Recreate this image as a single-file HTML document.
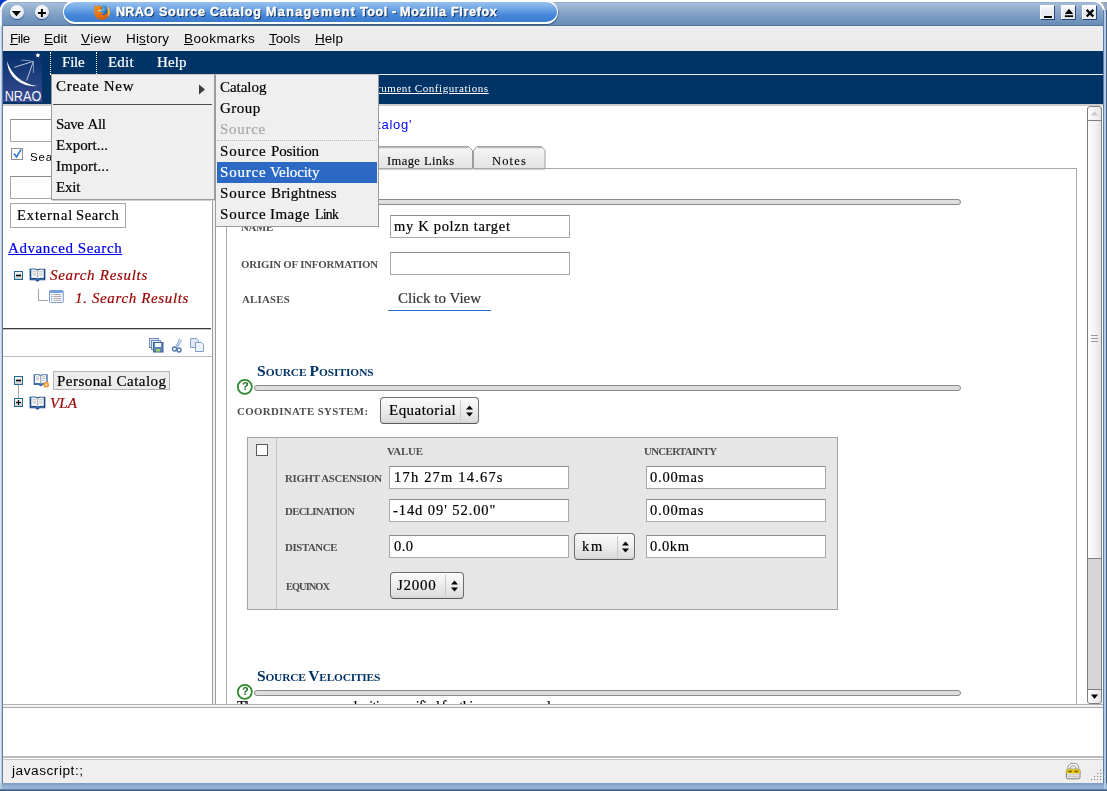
<!DOCTYPE html>
<html><head><meta charset="utf-8"><title>NRAO Source Catalog Management Tool - Mozilla Firefox</title>
<style>

html,body{margin:0;padding:0;}
body{width:1107px;height:791px;overflow:hidden;position:relative;background:#fff;font-family:"Liberation Sans",sans-serif;}
.a{position:absolute;box-sizing:border-box;}
.t{position:absolute;white-space:pre;line-height:1;will-change:transform;-webkit-text-stroke:0.2px;}
.inp{position:absolute;box-sizing:border-box;background:#fff;border:1px solid #a8a8a8;border-top-color:#8c8c8c;}
.sel{position:absolute;box-sizing:border-box;border:1px solid #6e6e6e;border-bottom-color:#5a5a5a;border-radius:4px;background:linear-gradient(#fbfbfb,#ececec 50%,#dedede 90%,#d2d2d2);}
.wb{width:15px;height:15px;background:linear-gradient(#fbfcfd,#e9edf2 35%,#e4e8ee 60%,#f2f4f7);border:1px solid #fbfcfd;border-right-color:#2a4d7e;border-bottom-color:#1f4273;}
.bar{position:absolute;box-sizing:border-box;height:6px;border:1px solid #8a8a8a;border-radius:3px;background:#dedede;}

</style></head>
<body>

<!-- window frame -->
<div class="a" style="left:0;top:0;width:1107px;height:791px;background:#fff;"></div>
<!-- title bar -->
<div class="a" id="titlebar" style="left:2px;top:2px;width:1101px;height:24px;background:linear-gradient(#8ea9ca 0,#a4bcd7 1.5px,#82a1c5 50%,#648ab5);border-radius:8.500px 9px 0 0;"></div>
<div class="a" style="left:3px;top:25px;width:1100px;height:1px;background:#52749e;"></div>
<div class="a" style="left:0;top:0;width:11px;height:11px;background:radial-gradient(circle at 10.300px 10.300px,rgba(255,255,255,0) 10.100px,#0a3cc0 10.900px);"></div>
<div class="a" style="left:1094px;top:2px;width:13px;height:8px;background:radial-gradient(circle at 0px 9px,rgba(255,255,255,0) 8.600px,#fff 9.200px,#fff 10.400px,#aab3c0 11px,#8fa3bd 14px);"></div>
<!-- side borders -->
<div class="a" style="left:0;top:9px;width:2px;height:17px;background:linear-gradient(90deg,#fafbfd,#dde6f1);"></div>
<div class="a" style="left:0;top:26px;width:3px;height:765px;background:linear-gradient(90deg,#eef2f8 0,#b9cbe2 1.500px,#b4c8e0 2.200px,#5d7ea8 2.400px);"></div>
<div class="a" style="left:1103px;top:10px;width:4px;height:781px;background:linear-gradient(90deg,#5d7ea8 0,#5d7ea8 1px,#b9cde6 1.2px,#b4c8e2 2.9px,#40608a 3.1px);"></div>
<div class="a" style="left:0;top:783px;width:1107px;height:8px;background:linear-gradient(#7c9cc4 0,#86a4ca 2px,#9ab4d4 3px,#93aed0 6.3px,#3c5a80 6.7px);"></div>
<div class="a" style="left:0;top:783px;width:2px;height:6px;background:#b4c8e0;"></div>
<div class="a" style="left:1104px;top:783px;width:2px;height:6px;background:#b4c8e2;"></div>
<!-- title buttons -->
<div class="a" style="left:10px;top:5.400px;width:13.500px;height:13.500px;border-radius:50%;background:radial-gradient(circle at 45% 35%,#fff,#e8edf3 55%,#b9c7d8);box-shadow:0 1px 1px #2b4f80;"></div>
<svg class="a" style="left:10px;top:5px" width="14" height="14"><path d="M1.900 5.900h9.100L6.450 11.200z" fill="#000"/></svg>
<div class="a" style="left:35px;top:5.400px;width:13.500px;height:13.500px;border-radius:50%;background:radial-gradient(circle at 45% 35%,#fff,#e8edf3 55%,#b9c7d8);box-shadow:0 1px 1px #2b4f80;"></div>
<svg class="a" style="left:35px;top:6px" width="14" height="14"><path d="M2.900 7.100h8M6.900 3.100v8" stroke="#000" stroke-width="2"/></svg>
<!-- title pill -->
<div class="a" style="left:62.5px;top:0px;width:495.5px;height:24px;border:2px solid #fff;border-left-width:1.6px;border-right-width:1.6px;border-radius:12px;background:linear-gradient(#97c1ee,#6ea5e5 35%,#4587d8 65%,#3b7cd0);box-shadow:0.5px 1px 1px rgba(20,40,80,.55);"></div>
<!-- firefox icon -->
<svg class="a" style="left:94px;top:4px" width="16" height="16" viewBox="0 0 16 16">
<defs><radialGradient id="gl" cx="0.35" cy="0.3" r="0.8"><stop offset="0" stop-color="#6fd2f8"/><stop offset="0.5" stop-color="#2f86d8"/><stop offset="1" stop-color="#143c96"/></radialGradient>
<linearGradient id="fx" x1="0" y1="0" x2="0.3" y2="1"><stop offset="0" stop-color="#f08a1c"/><stop offset="0.5" stop-color="#ee7f14"/><stop offset="1" stop-color="#d8600c"/></linearGradient></defs>
<circle cx="9.200" cy="6.600" r="5.400" fill="url(#gl)"/>
<path d="M1.300 0.500L2.800 2.600L5.200 1.300L6.300 0.800L6.800 3L8.800 3.200L8.400 4.600L7.200 5.200L7.400 6.500L5 7.500L7.500 8.500L9.500 8.200L9 9.800L7.600 10.800C9 11.500 11.500 11 12.800 9C13.800 7 13.600 4.500 12.500 2.200C14.800 3.500 16 6 15.800 8.500C15.500 12.800 12 15.800 8 15.800C3.500 15.800 0.200 12.500 0.200 8C0.200 5 0.500 2.500 1.300 0.500z" fill="url(#fx)"/>
<path d="M12.500 2.200C14.800 3.500 16 6 15.800 8.500C15.600 10.500 14.800 12 13.600 13.200C14.600 10 14.400 5.800 12.500 2.200z" fill="#f9c235"/>
<path d="M4 6.300L6.800 5.500L6.600 6.800L4.600 7.400z" fill="#fbe3a0"/>
<path d="M7 3.400L8.500 3.400L8.300 4.500L7.300 4.900z" fill="#7a1c08"/>
</svg>
<!-- window controls -->
<div class="a wb" style="left:1040px;top:5px;"></div>
<div class="a" style="left:1044px;top:15.500px;width:8px;height:2px;background:#000;"></div>
<div class="a wb" style="left:1061px;top:5px;"></div>
<svg class="a" style="left:1061px;top:5px" width="15" height="15"><path d="M3.800 9L8 3.800L12.200 9z" fill="#000"/><rect x="3.900" y="10.300" width="8.200" height="1.800" fill="#000"/></svg>
<div class="a wb" style="left:1082px;top:5px;"></div>
<svg class="a" style="left:1082px;top:5px" width="15" height="15"><path d="M4.700 4.900l6.600 6.600M11.300 4.900l-6.600 6.600" stroke="#000" stroke-width="2.300"/></svg>

<!-- firefox menubar -->
<div class="a" style="left:3px;top:26px;width:1100px;height:25px;background:linear-gradient(#eeeeee,#eaeaea);"></div>

<!-- navy header -->
<div class="a" style="left:3px;top:51px;width:1100px;height:53px;background:#003366;"></div>
<div class="a" style="left:50px;top:74px;width:1053px;height:1px;background:#e8eef4;"></div>
<div class="a" style="left:3px;top:104px;width:1100px;height:2px;background:#cfccc8;"></div>
<!-- logo -->
<div class="a" style="left:3px;top:51px;width:39px;height:51px;background:linear-gradient(#002e68,#1c3d7c 45%,#39498f);"></div>
<svg class="a" style="left:3px;top:51px" width="39" height="52" viewBox="0 0 39 52">
<path d="M4.200 10.300C4.300 24.500 17 36.500 34.200 35C19 33.200 8 23 4.200 10.300z" fill="#fff"/>
<path d="M30.400 10.300L11.400 16.300M30.400 10.300L23.600 29.600" stroke="#dfe6f2" stroke-width="0.800" fill="none"/>
<path d="M18.200 9.100L28.100 9.900M30.400 11.400V22" stroke="#aebbd6" stroke-width="0.700" fill="none"/>
<path d="M34.900 1.800l0.650 1.700 1.800 0.100-1.400 1.150 0.500 1.750-1.550-1-1.550 1 0.500-1.750-1.400-1.150 1.800-0.100z" fill="#fff"/>
<circle cx="34.900" cy="4.200" r="1.400" fill="#fff"/>
<text x="1.700" y="49.700" font-family="Liberation Sans" font-size="13.800" textLength="36.700" lengthAdjust="spacingAndGlyphs" fill="#f4f6fb">NRAO</text>
</svg>
<div class="a" style="left:50px;top:52px;width:0;height:22px;border-left:1px dotted #fff;"></div>
<div class="a" style="left:96px;top:52px;width:0;height:22px;border-left:1px dotted #fff;"></div>

<!-- left panel -->
<div class="a" style="left:3px;top:106px;width:209px;height:598px;background:#fff;"></div>
<div class="inp" style="left:10px;top:119px;width:120px;height:23px;"></div>
<div class="a" style="left:11px;top:148px;width:12px;height:12px;background:#fff;border:1px solid #8f8f8f;"></div>
<svg class="a" style="left:11px;top:147px" width="13" height="13"><path d="M3 6.5l2.5 3.5L10 2.5" stroke="#3b7ed6" stroke-width="1.7" fill="none"/></svg>
<div class="inp" style="left:10px;top:176px;width:120px;height:23px;"></div>
<div class="a" style="left:10px;top:203px;width:116px;height:25px;background:#fff;border:1px solid #a6a6a6;"></div>
<!-- tree 1 -->
<svg class="a" style="left:14px;top:271px" width="10" height="10"><defs><linearGradient id="eg271" x1="0" y1="0" x2="0" y2="1"><stop offset="0" stop-color="#fff"/><stop offset="1" stop-color="#c9c9c9"/></linearGradient></defs><rect x="0.500" y="0.500" width="8" height="8" fill="url(#eg271)" stroke="#1f6a96"/><rect x="2" y="3.700" width="5" height="1.600" fill="#000"/></svg>
<svg class="a bk" style="left:29px;top:268px" width="17" height="15" viewBox="0 0 17 15"><path d="M0.600 1.300Q0.600 0.700 1.300 0.700H7L8.500 1.500L10 0.700H15.700Q16.400 0.700 16.400 1.300V12.200H10.500Q10 13.600 8.500 13.600T6.500 12.200H0.600z" fill="#1d4d8a"/><path d="M0.600 1.300Q0.600 0.700 1.300 0.700H7L8.500 1.500V3H0.600z" fill="#3d6fae"/><path d="M2.300 1.700Q5.500 1 7.900 2.300V10.300Q5.500 9.300 2.300 10.100z" fill="#fff"/><path d="M14.700 1.700Q11.500 1 9.100 2.300V10.300Q11.500 9.300 14.700 10.100z" fill="#fff"/><path d="M8.500 2.300V10.600" stroke="#b8b8b8" stroke-width="1.100"/><path d="M3.300 3.400h3.600M3.300 5.200h3.600M3.300 7h3.600M10.100 3.400h3.600M10.100 5.200h3.600M10.100 7h3.600" stroke="#b0b0b0" stroke-width="0.800"/><path d="M2 11.400H15" stroke="#4a78b4" stroke-width="0.700"/></svg>
<div class="a" style="left:38px;top:289px;width:10px;height:12px;border-left:1px solid #a3a3a3;border-bottom:1px solid #a3a3a3;"></div>
<svg class="a" style="left:49px;top:290px" width="15.200" height="13.500" viewBox="0 0 16 14"><rect x="0.500" y="0.500" width="14.500" height="12.500" rx="1" fill="#fff" stroke="#6c90cc"/><rect x="1" y="1" width="13.500" height="2" fill="#6a9be2"/><path d="M4.500 4.700h8.500M4.500 6.700h8.500M4.500 8.700h8.500M4.500 10.700h8.500" stroke="#9a9a9a" stroke-width="0.900"/><path d="M2.200 4.700h1.200M2.200 6.700h1.200M2.200 8.700h1.200M2.200 10.700h1.200" stroke="#3b8cf0" stroke-width="1"/></svg>
<div class="a" style="left:3px;top:328px;width:208px;height:1px;background:#3c3c3c;"></div><div class="a" style="left:3px;top:329px;width:208px;height:1px;background:#c4c4c4;"></div>
<!-- toolbar icons -->
<svg class="a" style="left:148px;top:337px" width="16" height="16" viewBox="0 0 16 16"><rect x="1.5" y="1.5" width="9" height="9" fill="#dfe8f5" stroke="#6f8db8"/><rect x="3.5" y="3.5" width="9" height="9" fill="#dfe8f5" stroke="#6f8db8"/><rect x="5.5" y="5.5" width="9.5" height="9.5" fill="#5f83b8" stroke="#41618f"/><rect x="7" y="6" width="6" height="4" fill="#f2f5fa"/><rect x="8" y="12" width="4" height="2.5" fill="#9fd06a"/></svg>
<svg class="a" style="left:171px;top:337px" width="13" height="16" viewBox="0 0 13 16"><path d="M8.800 1.500L5 10M10.500 3L6.500 10" stroke="#9db9e0" stroke-width="1.400" fill="none"/><circle cx="3.5" cy="12" r="2" fill="none" stroke="#4f78b5" stroke-width="1.4"/><circle cx="8" cy="13" r="2" fill="none" stroke="#4f78b5" stroke-width="1.4"/></svg>
<svg class="a" style="left:189px;top:337px" width="16" height="16" viewBox="0 0 16 16"><path d="M1.5 1.5h6l2 2v7h-8z" fill="#dfe8f5" stroke="#7f9fcc"/><path d="M6.5 5.5h6l2 2v7h-8z" fill="#eef3fb" stroke="#7f9fcc"/></svg>
<div class="a" style="left:3px;top:356px;width:209px;height:1px;background:#bdbdbd;"></div>
<!-- tree 2 -->
<svg class="a" style="left:14px;top:376px" width="10" height="10"><defs><linearGradient id="eg376" x1="0" y1="0" x2="0" y2="1"><stop offset="0" stop-color="#fff"/><stop offset="1" stop-color="#c9c9c9"/></linearGradient></defs><rect x="0.500" y="0.500" width="8" height="8" fill="url(#eg376)" stroke="#1f6a96"/><rect x="2" y="3.700" width="5" height="1.600" fill="#000"/></svg>
<div class="a" style="left:18px;top:385px;width:1px;height:13px;background:#a8a8a8;"></div>
<svg class="a" style="left:33px;top:373px" width="17" height="16" viewBox="0 0 17 16"><path d="M0.600 1.800Q0.600 1.200 1.300 1.200H6.500L7.700 1.900L8.900 1.200H14Q14.700 1.200 14.700 1.800V12H9.500Q9 13.200 7.700 13.200T5.800 12H0.600z" fill="#3f6ea8"/><path d="M2 2.200Q4.800 1.600 7.200 2.700V10.200Q4.800 9.300 2 10z" fill="#fff"/><path d="M13.300 2.200Q10.600 1.600 8.200 2.700V10.200Q10.600 9.300 13.300 10z" fill="#fff"/><path d="M7.700 2.700V10.500" stroke="#b8b8b8" stroke-width="1"/><path d="M3 3.800h3.200M3 5.500h3.200M3 7.200h3.200M9.200 3.800h3.200M9.200 5.500h3.200M9.200 7.200h3.200" stroke="#b0b0b0" stroke-width="0.800"/><circle cx="13.200" cy="11.700" r="2.900" fill="#f39a3a"/><circle cx="13.200" cy="11.700" r="1.200" fill="#fbd9a8"/></svg>
<div class="a" style="left:53px;top:371px;width:117px;height:19px;background:#ececec;border:1px solid #b4b4b4;"></div>
<svg class="a" style="left:14px;top:398px" width="10" height="10"><defs><linearGradient id="eg398" x1="0" y1="0" x2="0" y2="1"><stop offset="0" stop-color="#fff"/><stop offset="1" stop-color="#c9c9c9"/></linearGradient></defs><rect x="0.500" y="0.500" width="8" height="8" fill="url(#eg398)" stroke="#1f6a96"/><rect x="2" y="3.900" width="5" height="1.200" fill="#000"/><rect x="3.900" y="2" width="1.200" height="5" fill="#000"/></svg>
<svg class="a bk" style="left:29px;top:396px" width="17" height="15" viewBox="0 0 17 15"><path d="M0.600 1.300Q0.600 0.700 1.300 0.700H7L8.500 1.500L10 0.700H15.700Q16.400 0.700 16.400 1.300V12.200H10.500Q10 13.600 8.500 13.600T6.500 12.200H0.600z" fill="#1d4d8a"/><path d="M0.600 1.300Q0.600 0.700 1.300 0.700H7L8.500 1.500V3H0.600z" fill="#3d6fae"/><path d="M2.300 1.700Q5.500 1 7.900 2.300V10.300Q5.500 9.300 2.300 10.100z" fill="#fff"/><path d="M14.700 1.700Q11.500 1 9.100 2.300V10.300Q11.500 9.300 14.700 10.100z" fill="#fff"/><path d="M8.500 2.300V10.600" stroke="#b8b8b8" stroke-width="1.100"/><path d="M3.300 3.400h3.600M3.300 5.200h3.600M3.300 7h3.600M10.100 3.400h3.600M10.100 5.200h3.600M10.100 7h3.600" stroke="#b0b0b0" stroke-width="0.800"/><path d="M2 11.400H15" stroke="#4a78b4" stroke-width="0.700"/></svg>

<!-- splitter -->
<div class="a" style="left:212px;top:106px;width:1px;height:598px;background:#9c9c9c;"></div>
<div class="a" style="left:213px;top:106px;width:2px;height:598px;background:#f1f1f1;"></div>
<div class="a" style="left:215px;top:106px;width:1px;height:598px;background:#9c9c9c;"></div>

<!-- main content -->
<div class="a" style="left:226px;top:168px;width:851px;height:560px;border:1px solid #a9a9a9;border-bottom:none;"></div>
<!-- tabs -->
<svg class="a" style="left:360px;top:140px" width="200" height="30" viewBox="360 140 200 30">
<defs><linearGradient id="tg" x1="0" y1="0" x2="0" y2="1"><stop offset="0" stop-color="#f7f7f7"/><stop offset="1" stop-color="#e2e2e2"/></linearGradient></defs>
<path d="M370.5 169V150.500L374 146.500H468.500L472.500 150.500V169z" fill="url(#tg)" stroke="#9c9c9c"/>
<path d="M374.500 147.500H468.500" stroke="#b9b9b9" stroke-width="1.5"/>
<path d="M473.500 169V150.500L477 146.500H541.500L545 150.500V169z" fill="url(#tg)" stroke="#9c9c9c"/>
<path d="M477.500 147.500H541.500" stroke="#b9b9b9" stroke-width="1.5"/>
</svg>
<div class="a" style="left:227px;top:168px;width:849px;height:1px;background:#a9a9a9;"></div>
<!-- bars -->
<div class="bar" style="left:254px;top:199px;width:707px;"></div>
<div class="bar" style="left:254px;top:385px;width:707px;"></div>
<div class="bar" style="left:254px;top:690px;width:707px;"></div>
<!-- inputs -->
<div class="inp" style="left:390px;top:215px;width:180px;height:23px;"></div>
<div class="inp" style="left:390px;top:252px;width:180px;height:23px;"></div>
<div class="a" style="left:388px;top:310px;width:103px;height:1px;background:#2f6bd0;"></div>
<!-- help icons -->
<svg class="a" style="left:236px;top:377.5px" width="18" height="18" viewBox="0 0 18 18"><circle cx="8.800" cy="8.900" r="7" fill="#fff" stroke="#2f8a2f" stroke-width="1.800"/></svg>
<svg class="a" style="left:236px;top:682.5px" width="18" height="18" viewBox="0 0 18 18"><circle cx="8.800" cy="8.900" r="7" fill="#fff" stroke="#2f8a2f" stroke-width="1.800"/></svg>
<!-- coordinate select -->
<div class="sel" style="left:380px;top:397px;width:99px;height:27px;"></div>
<div class="a" style="left:460px;top:400px;width:1px;height:21px;background:#c9c9c9;"></div>
<svg class="a" style="left:465px;top:404px" width="9" height="14"><path d="M4.5 1.500L8 5.500H1zM4.500 12.500L8 8.500H1z" fill="#000"/></svg>
<!-- positions box -->
<div class="a" style="left:247px;top:437px;width:591px;height:173px;background:#e6e6e6;border:1px solid #a3a3a3;"></div>
<div class="a" style="left:276px;top:438px;width:1px;height:171px;background:#c4c4c4;"></div>
<div class="a" style="left:256px;top:444px;width:12px;height:12px;background:#fff;border:1px solid #5a5a5a;"></div>
<div class="inp" style="left:389px;top:466px;width:180px;height:23px;"></div>
<div class="inp" style="left:646px;top:466px;width:180px;height:23px;"></div>
<div class="inp" style="left:389px;top:499px;width:180px;height:23px;"></div>
<div class="inp" style="left:646px;top:499px;width:180px;height:23px;"></div>
<div class="inp" style="left:389px;top:535px;width:180px;height:23px;"></div>
<div class="inp" style="left:646px;top:535px;width:180px;height:23px;"></div>
<div class="sel" style="left:574px;top:533px;width:61px;height:27px;"></div>
<div class="a" style="left:617px;top:536px;width:1px;height:21px;background:#c9c9c9;"></div>
<svg class="a" style="left:621px;top:540px" width="9" height="14"><path d="M4.5 1.500L8 5.500H1zM4.500 12.500L8 8.500H1z" fill="#000"/></svg>
<div class="sel" style="left:390px;top:572px;width:74px;height:27px;"></div>
<div class="a" style="left:445px;top:575px;width:1px;height:21px;background:#c9c9c9;"></div>
<svg class="a" style="left:450px;top:579px" width="9" height="14"><path d="M4.5 1.500L8 5.500H1zM4.500 12.500L8 8.500H1z" fill="#000"/></svg>

<span class="t" style="left:116.38px;top:6.40px;font-family:'Liberation Sans',sans-serif;font-size:12.6px;font-weight:bold;font-style:normal;color:#fff;letter-spacing:0.226px;-webkit-text-stroke:0;text-shadow:1px 1px 0.3px #0a1e44;-webkit-text-stroke:0.4px;">NRAO</span>
<span class="t" style="left:158.62px;top:6.40px;font-family:'Liberation Sans',sans-serif;font-size:12.6px;font-weight:bold;font-style:normal;color:#fff;letter-spacing:0.658px;-webkit-text-stroke:0;text-shadow:1px 1px 0.3px #0a1e44;-webkit-text-stroke:0.4px;">Source</span>
<span class="t" style="left:209.61px;top:6.40px;font-family:'Liberation Sans',sans-serif;font-size:12.6px;font-weight:bold;font-style:normal;color:#fff;letter-spacing:0.773px;-webkit-text-stroke:0;text-shadow:1px 1px 0.3px #0a1e44;-webkit-text-stroke:0.4px;">Catalog</span>
<span class="t" style="left:265.68px;top:6.40px;font-family:'Liberation Sans',sans-serif;font-size:12.6px;font-weight:bold;font-style:normal;color:#fff;letter-spacing:1.335px;-webkit-text-stroke:0;text-shadow:1px 1px 0.3px #0a1e44;-webkit-text-stroke:0.4px;">Management</span>
<span class="t" style="left:360.07px;top:6.40px;font-family:'Liberation Sans',sans-serif;font-size:12.6px;font-weight:bold;font-style:normal;color:#fff;letter-spacing:0.558px;-webkit-text-stroke:0;text-shadow:1px 1px 0.3px #0a1e44;-webkit-text-stroke:0.4px;">Tool</span>
<span class="t" style="left:391.88px;top:6.40px;font-family:'Liberation Sans',sans-serif;font-size:12.6px;font-weight:bold;font-style:normal;color:#fff;-webkit-text-stroke:0;text-shadow:1px 1px 0.3px #0a1e44;-webkit-text-stroke:0.4px;">-</span>
<span class="t" style="left:400.38px;top:6.40px;font-family:'Liberation Sans',sans-serif;font-size:12.6px;font-weight:bold;font-style:normal;color:#fff;letter-spacing:0.653px;-webkit-text-stroke:0;text-shadow:1px 1px 0.3px #0a1e44;-webkit-text-stroke:0.4px;">Mozilla</span>
<span class="t" style="left:451.38px;top:6.40px;font-family:'Liberation Sans',sans-serif;font-size:12.6px;font-weight:bold;font-style:normal;color:#fff;letter-spacing:0.645px;-webkit-text-stroke:0;text-shadow:1px 1px 0.3px #0a1e44;-webkit-text-stroke:0.4px;">Firefox</span>
<span class="t" style="left:10.00px;top:32.00px;font-family:'Liberation Sans',sans-serif;font-size:13.5px;font-weight:normal;font-style:normal;color:#000;letter-spacing:-0.500px;-webkit-text-stroke:0;"><u>F</u>ile</span>
<span class="t" style="left:44.00px;top:32.00px;font-family:'Liberation Sans',sans-serif;font-size:13.5px;font-weight:normal;font-style:normal;color:#000;letter-spacing:-0.032px;-webkit-text-stroke:0;"><u>E</u>dit</span>
<span class="t" style="left:81.12px;top:32.00px;font-family:'Liberation Sans',sans-serif;font-size:13.5px;font-weight:normal;font-style:normal;color:#000;letter-spacing:0.361px;-webkit-text-stroke:0;"><u>V</u>iew</span>
<span class="t" style="left:126.20px;top:32.00px;font-family:'Liberation Sans',sans-serif;font-size:13.5px;font-weight:normal;font-style:normal;color:#000;letter-spacing:0.172px;-webkit-text-stroke:0;">Hi<u>s</u>tory</span>
<span class="t" style="left:184.00px;top:32.00px;font-family:'Liberation Sans',sans-serif;font-size:13.5px;font-weight:normal;font-style:normal;color:#000;letter-spacing:0.413px;-webkit-text-stroke:0;"><u>B</u>ookmarks</span>
<span class="t" style="left:269.09px;top:32.00px;font-family:'Liberation Sans',sans-serif;font-size:13.5px;font-weight:normal;font-style:normal;color:#000;letter-spacing:-0.072px;-webkit-text-stroke:0;"><u>T</u>ools</span>
<span class="t" style="left:314.80px;top:32.00px;font-family:'Liberation Sans',sans-serif;font-size:13.5px;font-weight:normal;font-style:normal;color:#000;letter-spacing:0.040px;-webkit-text-stroke:0;"><u>H</u>elp</span>
<span class="t" style="left:61.72px;top:55.00px;font-family:'Liberation Serif',serif;font-size:15px;font-weight:normal;font-style:normal;color:#fff;letter-spacing:-0.206px;">File</span>
<span class="t" style="left:107.62px;top:55.00px;font-family:'Liberation Serif',serif;font-size:15px;font-weight:normal;font-style:normal;color:#fff;letter-spacing:0.190px;">Edit</span>
<span class="t" style="left:156.65px;top:55.00px;font-family:'Liberation Serif',serif;font-size:15px;font-weight:normal;font-style:normal;color:#fff;letter-spacing:0.112px;">Help</span>
<span class="t" style="left:377.43px;top:82.50px;font-family:'Liberation Serif',serif;font-size:11px;font-weight:normal;font-style:normal;color:#fff;letter-spacing:0.559px;text-decoration:underline;-webkit-text-stroke:0;">rument Configurations</span>
<span class="t" style="left:30.18px;top:152.00px;font-family:'Liberation Sans',sans-serif;font-size:11.5px;font-weight:normal;font-style:normal;color:#000;letter-spacing:0.788px;-webkit-text-stroke:0;">Sea</span>
<span class="t" style="left:17.33px;top:207.50px;font-family:'Liberation Serif',serif;font-size:14.5px;font-weight:normal;font-style:normal;color:#000;letter-spacing:0.885px;">External</span>
<span class="t" style="left:76.40px;top:207.50px;font-family:'Liberation Serif',serif;font-size:14.5px;font-weight:normal;font-style:normal;color:#000;letter-spacing:0.639px;">Search</span>
<span class="t" style="left:8.13px;top:240.50px;font-family:'Liberation Serif',serif;font-size:15px;font-weight:normal;font-style:normal;color:#0000ee;letter-spacing:0.591px;text-decoration:underline;">Advanced Search</span>
<span class="t" style="left:49.96px;top:267.50px;font-family:'Liberation Serif',serif;font-size:15px;font-weight:normal;font-style:italic;color:#990000;letter-spacing:0.703px;">Search Results</span>
<span class="t" style="left:75.25px;top:290.50px;font-family:'Liberation Serif',serif;font-size:15px;font-weight:normal;font-style:italic;color:#990000;letter-spacing:0.640px;">1. Search Results</span>
<span class="t" style="left:57.32px;top:373.50px;font-family:'Liberation Serif',serif;font-size:15px;font-weight:normal;font-style:normal;color:#000;letter-spacing:0.462px;">Personal Catalog</span>
<span class="t" style="left:49.69px;top:395.50px;font-family:'Liberation Serif',serif;font-size:15px;font-weight:normal;font-style:italic;color:#990000;letter-spacing:0.066px;">VLA</span>
<span class="t" style="left:376.68px;top:118.00px;font-family:'Liberation Sans',sans-serif;font-size:13px;font-weight:normal;font-style:normal;color:#0000ff;letter-spacing:0.785px;-webkit-text-stroke:0;">talog&#x27;</span>
<span class="t" style="left:386.89px;top:155.00px;font-family:'Liberation Serif',serif;font-size:12.5px;font-weight:normal;font-style:normal;color:#000;letter-spacing:0.421px;-webkit-text-stroke:0.1px;">Image Links</span>
<span class="t" style="left:492.13px;top:155.00px;font-family:'Liberation Serif',serif;font-size:12.5px;font-weight:normal;font-style:normal;color:#000;letter-spacing:1.150px;-webkit-text-stroke:0.1px;">Notes</span>
<span class="t" style="left:241.45px;top:222.00px;font-family:'Liberation Serif',serif;font-size:10.8px;font-weight:bold;font-style:normal;color:#4d4d4d;letter-spacing:-0.286px;-webkit-text-stroke:0;">NAME</span>
<span class="t" style="left:394.47px;top:219.00px;font-family:'Liberation Serif',serif;font-size:14.5px;font-weight:normal;font-style:normal;color:#000;letter-spacing:0.696px;">my K polzn target</span>
<span class="t" style="left:241.49px;top:259.00px;font-family:'Liberation Serif',serif;font-size:10.8px;font-weight:bold;font-style:normal;color:#4d4d4d;letter-spacing:-0.160px;-webkit-text-stroke:0;">ORIGIN OF INFORMATION</span>
<span class="t" style="left:241.58px;top:294.00px;font-family:'Liberation Serif',serif;font-size:10.8px;font-weight:bold;font-style:normal;color:#4d4d4d;letter-spacing:0.265px;-webkit-text-stroke:0;">ALIASES</span>
<span class="t" style="left:398.37px;top:290.50px;font-family:'Liberation Serif',serif;font-size:15px;font-weight:normal;font-style:normal;color:#333;letter-spacing:0.007px;">Click to View</span>
<span class="t" style="left:256.80px;top:363.00px;font-family:'Liberation Serif',serif;font-size:11.4px;font-weight:bold;font-style:normal;color:#003366;letter-spacing:-0.039px;-webkit-text-stroke:0;"><span style="font-size:15.6px">S</span>OURCE <span style="font-size:15.6px">P</span>OSITIONS</span>
<span class="t" style="left:241.84px;top:381.30px;font-family:'Liberation Sans',sans-serif;font-size:11px;font-weight:bold;font-style:normal;color:#1e701e;-webkit-text-stroke:0;">?</span>
<span class="t" style="left:241.84px;top:686.30px;font-family:'Liberation Sans',sans-serif;font-size:11px;font-weight:bold;font-style:normal;color:#1e701e;-webkit-text-stroke:0;">?</span>
<span class="t" style="left:236.89px;top:405.60px;font-family:'Liberation Serif',serif;font-size:10.8px;font-weight:bold;font-style:normal;color:#4d4d4d;letter-spacing:0.397px;-webkit-text-stroke:0;">COORDINATE SYSTEM:</span>
<span class="t" style="left:389.32px;top:402.80px;font-family:'Liberation Serif',serif;font-size:15px;font-weight:normal;font-style:normal;color:#000;letter-spacing:0.471px;">Equatorial</span>
<span class="t" style="left:386.60px;top:446.00px;font-family:'Liberation Serif',serif;font-size:10.8px;font-weight:bold;font-style:normal;color:#4d4d4d;letter-spacing:-0.115px;-webkit-text-stroke:0;">VALUE</span>
<span class="t" style="left:644.42px;top:446.00px;font-family:'Liberation Serif',serif;font-size:10.8px;font-weight:bold;font-style:normal;color:#4d4d4d;letter-spacing:-0.610px;-webkit-text-stroke:0;">UNCERTAINTY</span>
<span class="t" style="left:285.46px;top:473.00px;font-family:'Liberation Serif',serif;font-size:10.8px;font-weight:bold;font-style:normal;color:#4d4d4d;letter-spacing:-0.274px;-webkit-text-stroke:0;">RIGHT ASCENSION</span>
<span class="t" style="left:393.91px;top:470.00px;font-family:'Liberation Serif',serif;font-size:14.5px;font-weight:normal;font-style:normal;color:#000;letter-spacing:1.190px;">17h 27m 14.67s</span>
<span class="t" style="left:650.46px;top:470.00px;font-family:'Liberation Serif',serif;font-size:14.5px;font-weight:normal;font-style:normal;color:#000;letter-spacing:0.756px;">0.00mas</span>
<span class="t" style="left:285.46px;top:506.00px;font-family:'Liberation Serif',serif;font-size:10.8px;font-weight:bold;font-style:normal;color:#4d4d4d;letter-spacing:-0.669px;-webkit-text-stroke:0;">DECLINATION</span>
<span class="t" style="left:393.01px;top:503.00px;font-family:'Liberation Serif',serif;font-size:14.5px;font-weight:normal;font-style:normal;color:#000;letter-spacing:0.927px;">-14d 09&#x27; 52.00&quot;</span>
<span class="t" style="left:650.46px;top:503.00px;font-family:'Liberation Serif',serif;font-size:14.5px;font-weight:normal;font-style:normal;color:#000;letter-spacing:0.756px;">0.00mas</span>
<span class="t" style="left:285.46px;top:542.00px;font-family:'Liberation Serif',serif;font-size:10.8px;font-weight:bold;font-style:normal;color:#4d4d4d;letter-spacing:-0.367px;-webkit-text-stroke:0;">DISTANCE</span>
<span class="t" style="left:393.86px;top:539.00px;font-family:'Liberation Serif',serif;font-size:14.5px;font-weight:normal;font-style:normal;color:#000;letter-spacing:0.400px;">0.0</span>
<span class="t" style="left:581.58px;top:539.00px;font-family:'Liberation Serif',serif;font-size:14.5px;font-weight:normal;font-style:normal;color:#000;letter-spacing:1.649px;">km</span>
<span class="t" style="left:650.46px;top:539.00px;font-family:'Liberation Serif',serif;font-size:14.5px;font-weight:normal;font-style:normal;color:#000;letter-spacing:0.583px;">0.0km</span>
<span class="t" style="left:286.47px;top:582.00px;font-family:'Liberation Serif',serif;font-size:10.4px;font-weight:bold;font-style:normal;color:#4d4d4d;letter-spacing:-0.953px;-webkit-text-stroke:0;">EQUINOX</span>
<span class="t" style="left:396.68px;top:577.80px;font-family:'Liberation Serif',serif;font-size:15px;font-weight:normal;font-style:normal;color:#000;letter-spacing:0.744px;">J2000</span>
<span class="t" style="left:256.80px;top:668.00px;font-family:'Liberation Serif',serif;font-size:11.4px;font-weight:bold;font-style:normal;color:#003366;letter-spacing:-0.206px;-webkit-text-stroke:0;"><span style="font-size:15.6px">S</span>OURCE <span style="font-size:15.6px">V</span>ELOCITIES</span>
<span class="t" style="left:236.80px;top:698.80px;font-family:'Liberation Serif',serif;font-size:14.5px;font-weight:normal;font-style:normal;color:#000;letter-spacing:-0.705px;">There are no source velocities specified for this source record.</span>

<!-- scrollbar -->
<div class="a" style="left:1087px;top:106px;width:16px;height:598px;background:#fff;"></div>
<div class="a" style="left:1087px;top:108px;width:15px;height:594px;background:#d5d5d5;border-left:1px solid #7f7f7f;border-right:1px solid #7f7f7f;"></div>
<div class="a" style="left:1087px;top:106px;width:15px;height:15px;background:linear-gradient(90deg,#fdfdfd,#f3f3f3 50%,#e4e4e4);border:1px solid #7f7f7f;border-radius:3px 3px 0 0;"></div>
<svg class="a" style="left:1087px;top:106px" width="15" height="15"><path d="M4 9.500L7.500 5L11 9.500z" fill="#cbcbcb"/></svg>
<div class="a" style="left:1087px;top:120px;width:15px;height:439px;background:linear-gradient(90deg,#fdfdfd,#f3f3f3 50%,#e4e4e4);border:1px solid #7f7f7f;"></div>
<div class="a" style="left:1091px;top:335px;width:7px;height:1px;background:#9a9a9a;box-shadow:0 3px 0 #9a9a9a,0 6px 0 #9a9a9a;"></div>
<div class="a" style="left:1087px;top:689px;width:15px;height:15px;background:linear-gradient(90deg,#fdfdfd,#f3f3f3 50%,#e4e4e4);border:1px solid #7f7f7f;border-radius:0 0 3px 3px;"></div>
<svg class="a" style="left:1087px;top:689px" width="15" height="15"><path d="M4 5.500L7.500 10L11 5.500z" fill="#000"/></svg>

<!-- bottom area -->
<div class="a" style="left:3px;top:704px;width:1100px;height:79px;background:#fff;"></div>
<div class="a" style="left:3px;top:704px;width:1100px;height:1px;background:#b0b0b0;"></div>
<div class="a" style="left:3px;top:705px;width:1100px;height:2px;background:#f2f2f2;"></div>
<div class="a" style="left:3px;top:707px;width:1100px;height:1px;background:#a8a8a8;"></div>
<div class="a" style="left:3px;top:756px;width:1100px;height:2px;background:#bcbcbc;"></div>
<div class="a" style="left:3px;top:759px;width:1100px;height:1px;background:#c6c6c6;"></div>
<div class="a" style="left:3px;top:760px;width:1100px;height:23px;background:#efefef;"></div>
<!-- lock -->
<svg class="a" style="left:1065px;top:762px" width="17" height="18" viewBox="0 0 17 18">
<path d="M2.800 8.500V6.200C2.800 2.800 5 1.300 8.200 1.300S13.600 2.800 13.600 6.200V8.500H11V6.300C11 4.600 10 3.800 8.200 3.800S5.400 4.600 5.400 6.300V8.500z" fill="#f6f6f6" stroke="#8a8a8a" stroke-width="0.900"/>
<rect x="1.400" y="7.200" width="13.600" height="9.600" rx="1.600" fill="#eeeeee" stroke="#6e6e66" stroke-width="0.900"/>
<rect x="1.400" y="7.200" width="13.600" height="4.400" rx="1.200" fill="#e6c510"/>
<path d="M3.500 9.500h3.300M9.600 9.500h3.300" stroke="#6a5a00" stroke-width="1.300"/>
<path d="M2.500 12.900h11.400M2.500 14.700h11.400" stroke="#b9b9b9" stroke-width="0.900"/>
</svg>
<svg class="a" style="left:1088px;top:767px" width="15" height="15" viewBox="1088 767 15 15"><g fill="#8e8e8e">
<rect x="1100" y="769.800" width="1.300" height="1.300"/>
<rect x="1097" y="772.900" width="1.300" height="1.300"/><rect x="1100" y="772.900" width="1.300" height="1.300"/>
<rect x="1094" y="775.900" width="1.300" height="1.300"/><rect x="1097" y="775.900" width="1.300" height="1.300"/><rect x="1100" y="775.900" width="1.300" height="1.300"/>
<rect x="1091" y="778.900" width="1.300" height="1.300"/><rect x="1094" y="778.900" width="1.300" height="1.300"/><rect x="1097" y="778.900" width="1.300" height="1.300"/><rect x="1100" y="778.900" width="1.300" height="1.300"/>
</g><g fill="#fff">
<rect x="1101" y="770.800" width="1" height="1"/>
<rect x="1098" y="773.900" width="1" height="1"/><rect x="1101" y="773.900" width="1" height="1"/>
<rect x="1095" y="776.900" width="1" height="1"/><rect x="1098" y="776.900" width="1" height="1"/><rect x="1101" y="776.900" width="1" height="1"/>
<rect x="1092" y="779.900" width="1" height="1"/><rect x="1095" y="779.900" width="1" height="1"/><rect x="1098" y="779.900" width="1" height="1"/><rect x="1101" y="779.900" width="1" height="1"/>
</g></svg>

<!-- popup menus -->
<div class="a" style="left:51px;top:74px;width:164px;height:126px;background:#efefef;border:1px solid #9b9b9b;border-top-color:#c9c9c9;box-shadow:1px 1px 0 #cfcfcf;"></div>
<div class="a" style="left:53px;top:104px;width:159px;height:1px;background:#4d4d4d;"></div>
<svg class="a" style="left:198px;top:83px" width="8" height="13"><path d="M1 1.500L7 6.500L1 11.500z" fill="#3c3c3c"/></svg>
<div class="a" style="left:215px;top:74px;width:164px;height:153px;background:#efefef;border:1px solid #9b9b9b;border-top-color:#c9c9c9;"></div>
<div class="a" style="left:217px;top:140px;width:160px;height:0;border-top:1px dotted #b9b9b9;"></div>
<div class="a" style="left:217px;top:162px;width:160px;height:21px;background:#2b69c5;"></div>

<span class="t" style="left:12.17px;top:764.00px;font-family:'Liberation Sans',sans-serif;font-size:13.7px;font-weight:normal;font-style:normal;color:#000;letter-spacing:0.511px;-webkit-text-stroke:0;">javascript:;</span>
<span class="t" style="left:55.67px;top:78.50px;font-family:'Liberation Serif',serif;font-size:15px;font-weight:normal;font-style:normal;color:#000;letter-spacing:0.699px;">Create New</span>
<span class="t" style="left:56.00px;top:116.50px;font-family:'Liberation Serif',serif;font-size:15px;font-weight:normal;font-style:normal;color:#000;letter-spacing:-0.401px;word-spacing:1.5px;">Save All</span>
<span class="t" style="left:55.82px;top:137.50px;font-family:'Liberation Serif',serif;font-size:15px;font-weight:normal;font-style:normal;color:#000;letter-spacing:-0.011px;">Export...</span>
<span class="t" style="left:55.76px;top:158.50px;font-family:'Liberation Serif',serif;font-size:15px;font-weight:normal;font-style:normal;color:#000;letter-spacing:0.109px;">Import...</span>
<span class="t" style="left:55.62px;top:179.50px;font-family:'Liberation Serif',serif;font-size:15px;font-weight:normal;font-style:normal;color:#000;letter-spacing:-0.210px;">Exit</span>
<span class="t" style="left:219.87px;top:79.50px;font-family:'Liberation Serif',serif;font-size:15px;font-weight:normal;font-style:normal;color:#000;letter-spacing:-0.040px;">Catalog</span>
<span class="t" style="left:219.87px;top:100.50px;font-family:'Liberation Serif',serif;font-size:15px;font-weight:normal;font-style:normal;color:#000;letter-spacing:0.481px;">Group</span>
<span class="t" style="left:219.50px;top:121.50px;font-family:'Liberation Serif',serif;font-size:15px;font-weight:normal;font-style:normal;color:#a9a9a9;letter-spacing:0.700px;">Source</span>
<span class="t" style="left:219.50px;top:143.50px;font-family:'Liberation Serif',serif;font-size:15px;font-weight:normal;font-style:normal;color:#000;letter-spacing:0.800px;">Source</span>
<span class="t" style="left:270.52px;top:143.50px;font-family:'Liberation Serif',serif;font-size:15px;font-weight:normal;font-style:normal;color:#000;letter-spacing:-0.155px;">Position</span>
<span class="t" style="left:219.50px;top:164.50px;font-family:'Liberation Serif',serif;font-size:15px;font-weight:normal;font-style:normal;color:#fff;letter-spacing:0.800px;">Source</span>
<span class="t" style="left:270.07px;top:164.50px;font-family:'Liberation Serif',serif;font-size:15px;font-weight:normal;font-style:normal;color:#fff;letter-spacing:-0.081px;">Velocity</span>
<span class="t" style="left:219.50px;top:185.50px;font-family:'Liberation Serif',serif;font-size:15px;font-weight:normal;font-style:normal;color:#000;letter-spacing:0.800px;">Source</span>
<span class="t" style="left:270.52px;top:185.50px;font-family:'Liberation Serif',serif;font-size:15px;font-weight:normal;font-style:normal;color:#000;letter-spacing:0.161px;">Brightness</span>
<span class="t" style="left:219.50px;top:206.50px;font-family:'Liberation Serif',serif;font-size:15px;font-weight:normal;font-style:normal;color:#000;letter-spacing:0.800px;">Source</span>
<span class="t" style="left:270.46px;top:206.50px;font-family:'Liberation Serif',serif;font-size:15px;font-weight:normal;font-style:normal;color:#000;letter-spacing:0.460px;">Image</span>
<span class="t" style="left:314.55px;top:207.50px;font-family:'Liberation Serif',serif;font-size:13.8px;font-weight:normal;font-style:normal;color:#000;letter-spacing:-0.746px;">Link</span>

</body></html>
